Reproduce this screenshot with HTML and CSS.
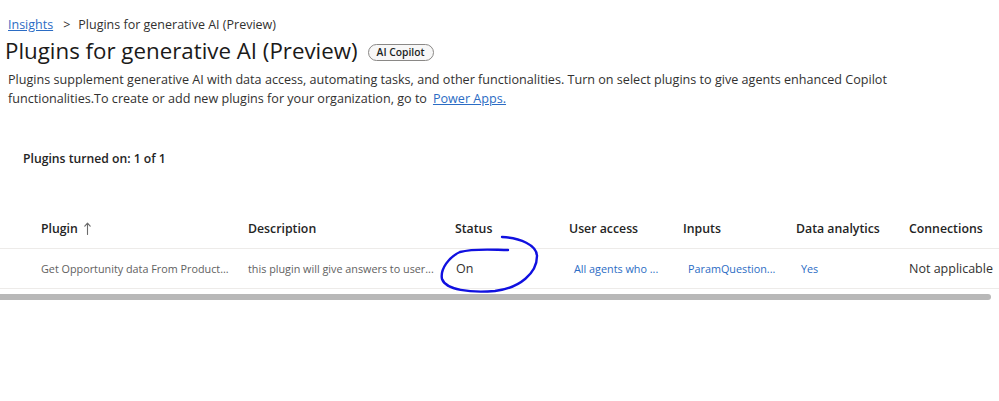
FILE: index.html
```html
<!DOCTYPE html>
<html lang="en">
<head>
<meta charset="utf-8">
<title>Plugins for generative AI (Preview)</title>
<link rel="stylesheet" href="styles.css">
</head>
<body>
<div class="page">
  <nav class="crumbs">
    <a class="crumb-link" href="#">Insights</a>
    <span class="crumb-sep">&gt;</span>
    <span class="crumb-current">Plugins for generative AI (Preview)</span>
  </nav>
  <header class="title-row">
    <h1 class="title">Plugins for generative AI (Preview)</h1>
    <span class="badge">AI Copilot</span>
  </header>
  <div class="intro">
    <span class="intro-line">Plugins supplement generative AI with data access, automating tasks, and other functionalities. Turn on select plugins to give agents enhanced Copilot</span>
    <span class="intro-line"><span>functionalities.To create or add new plugins for your organization, go to</span><a class="intro-link" href="#">Power Apps.</a></span>
  </div>
  <div class="count">Plugins turned on: 1 of 1</div>
  <div class="table">
    <div class="row head">
      <div class="cell first">Plugin
        <svg class="sort" width="7" height="13" viewBox="0 0 7 13" aria-hidden="true">
          <path d="M3.5,1.5 V12.5 M0.8,4.2 L3.5,1.2 L6.2,4.2" fill="none" stroke="#6b6b6b" stroke-width="1.1" stroke-linecap="round" stroke-linejoin="round"/>
        </svg>
      </div>
      <div class="cell">Description</div>
      <div class="cell">Status</div>
      <div class="cell">User access</div>
      <div class="cell">Inputs</div>
      <div class="cell">Data analytics</div>
      <div class="cell">Connections</div>
    </div>
    <div class="row data">
      <div class="cell first muted">Get Opportunity data From Product...</div>
      <div class="cell muted">this plugin will give answers to user...</div>
      <div class="cell plain status">On
        <svg class="scribble" width="110" height="70" viewBox="430 232 110 70" aria-hidden="true">
          <path d="M502,239 C520,240 537,247 537,258 C537,275 520,290 495,293 C470,295 446,292 442,281 C440,271 449,259 460,254 C475,250 495,252 508,252" fill="none" stroke="#1010e0" stroke-width="2.4" stroke-linecap="round"/>
        </svg>
      </div>
      <div class="cell link">All agents who ...</div>
      <div class="cell link">ParamQuestion...</div>
      <div class="cell link">Yes</div>
      <div class="cell plain">Not applicable</div>
    </div>
    <div class="scrollbar"><div class="thumb"></div></div>
  </div>
</div>
</body>
</html>
```
FILE: styles.css
```css
* { box-sizing: border-box; }
html, body { margin: 0; padding: 0; background: #ffffff; }
body {
  font-family: "Open Sans", "Noto Sans", sans-serif;
  color: #242424;
  width: 999px;
  height: 401px;
  overflow: hidden;
}
.page { padding-top: 16px; }
.crumbs {
  display: flex;
  align-items: baseline;
  gap: 8px;
  padding-left: 8px;
  font-size: 12.5px;
  line-height: 18px;
  color: #323130;
}
.crumb-link { color: #2b6cc4; text-decoration: underline; }
.crumb-sep { margin-left: 2px; }
.title-row {
  display: flex;
  align-items: center;
  gap: 10px;
  padding-left: 5px;
  margin-top: 0;
}
.title {
  margin: 0;
  font-size: 22.3px;
  font-weight: 400;
  line-height: 34px;
  color: #1b1a19;
}
.badge {
  font-size: 10.3px;
  font-weight: 600;
  line-height: 15px;
  padding: 0 8px;
  border: 1px solid #8a8886;
  border-radius: 9px;
  background: #f7f7f7;
  color: #201f1e;
  margin-top: 3px;
}
.intro {
  display: flex;
  flex-direction: column;
  margin-top: 2px;
  padding: 0 8px;
  font-size: 12.6px;
  line-height: 19px;
  color: #323130;
}
.intro-line { white-space: nowrap; }
.intro-link { color: #2b6cc4; text-decoration: underline; margin-left: 6px; }
.count {
  margin-top: 42px;
  padding-left: 23px;
  font-size: 12.2px;
  font-weight: 600;
  color: #242424;
  line-height: 18px;
}
.table { margin-top: 41px; position: relative; }
.row {
  display: grid;
  grid-template-columns: 248px 207px 114px 114px 113px 113px 90px;
  align-items: center;
  border-bottom: 1px solid #edebe9;
}
.row.head { height: 40px; font-size: 12.3px; font-weight: 600; color: #242424; padding-bottom: 1px; }
.row.data { height: 40px; font-size: 10.8px; }
.cell { white-space: nowrap; }
.cell.first { padding-left: 41px; }
.head .cell.first { display: flex; align-items: center; gap: 6px; }
.sort { display: block; }
.muted { color: #616161; }
.plain { font-size: 12.5px; color: #323130; }
.status { position: relative; padding-left: 1px; }
.link { color: #2b6cc4; padding-left: 5px; }
.scribble { position: absolute; left: -25px; top: -30px; overflow: visible; pointer-events: none; }
.scrollbar { height: 12px; padding-top: 5px; }
.thumb { height: 6px; width: 991px; background: #b8b8b8; border-radius: 0 3px 3px 0; }
```
